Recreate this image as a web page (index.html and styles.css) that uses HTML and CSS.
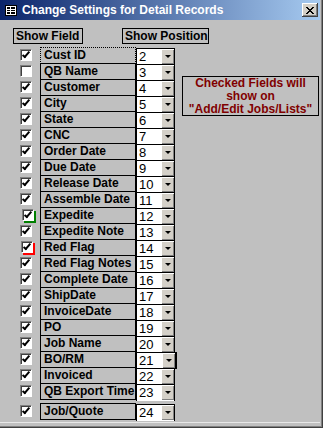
FILE: index.html
```html
<!DOCTYPE html>
<html lang="en">
<head>
    <meta charset="UTF-8">
    <title>Change Settings for Detail Records</title>
    <link rel="stylesheet" href="styles.css">
</head>
<body>
    <div class="window">
        <div class="titlebar">
            <svg class="app-icon" width="12" height="11" viewBox="0 0 12 11">
                <rect x="0.5" y="0.5" width="11" height="10" fill="#fff" stroke="#000"/>
                <rect x="2" y="2" width="3" height="2" fill="#000"/>
                <rect x="6" y="2" width="4" height="2" fill="#000"/>
                <rect x="2" y="5" width="3" height="1" fill="#000"/>
                <rect x="6" y="5" width="4" height="1" fill="#000"/>
                <rect x="2" y="7" width="3" height="2" fill="#000"/>
                <rect x="6" y="7" width="4" height="2" fill="#000"/>
            </svg>
            <span class="title">Change Settings for Detail Records</span>
            <span class="close-btn">
                <svg width="8" height="7" viewBox="0 0 8 7">
                    <path d="M0 0 L7 7 M1 0 L8 7 M7 0 L0 7 M8 0 L1 7" stroke="#000" stroke-width="1"/>
                </svg>
            </span>
        </div>

        <div class="form">
            <div class="headings">
                <div class="heading heading-field">Show Field</div>
                <div class="heading heading-pos">Show Position</div>
            </div>

            <div class="content">
                <div class="fields">
                    <div class="row"><span class="check on"></span><span class="label focus">Cust ID</span><span class="combo"><span class="val">2</span><span class="drop"></span></span></div>
                    <div class="row"><span class="check"></span><span class="label">QB Name</span><span class="combo"><span class="val">3</span><span class="drop"></span></span></div>
                    <div class="row"><span class="check on"></span><span class="label">Customer</span><span class="combo"><span class="val">4</span><span class="drop"></span></span></div>
                    <div class="row"><span class="check on"></span><span class="label">City</span><span class="combo"><span class="val">5</span><span class="drop"></span></span></div>
                    <div class="row"><span class="check on"></span><span class="label">State</span><span class="combo"><span class="val">6</span><span class="drop"></span></span></div>
                    <div class="row"><span class="check on"></span><span class="label">CNC</span><span class="combo"><span class="val">7</span><span class="drop"></span></span></div>
                    <div class="row"><span class="check on"></span><span class="label">Order Date</span><span class="combo"><span class="val">8</span><span class="drop"></span></span></div>
                    <div class="row"><span class="check on"></span><span class="label">Due Date</span><span class="combo"><span class="val">9</span><span class="drop"></span></span></div>
                    <div class="row"><span class="check on"></span><span class="label">Release Date</span><span class="combo"><span class="val">10</span><span class="drop"></span></span></div>
                    <div class="row"><span class="check on"></span><span class="label">Assemble Date</span><span class="combo"><span class="val">11</span><span class="drop"></span></span></div>
                    <div class="row"><span class="check on flag-green"></span><span class="label">Expedite</span><span class="combo"><span class="val">12</span><span class="drop"></span></span></div>
                    <div class="row"><span class="check on"></span><span class="label">Expedite Note</span><span class="combo"><span class="val">13</span><span class="drop"></span></span></div>
                    <div class="row"><span class="check on flag-red"></span><span class="label">Red Flag</span><span class="combo"><span class="val">14</span><span class="drop"></span></span></div>
                    <div class="row"><span class="check on"></span><span class="label">Red Flag Notes</span><span class="combo"><span class="val">15</span><span class="drop"></span></span></div>
                    <div class="row"><span class="check on"></span><span class="label">Complete Date</span><span class="combo"><span class="val">16</span><span class="drop"></span></span></div>
                    <div class="row"><span class="check on"></span><span class="label">ShipDate</span><span class="combo"><span class="val">17</span><span class="drop"></span></span></div>
                    <div class="row"><span class="check on"></span><span class="label">InvoiceDate</span><span class="combo"><span class="val">18</span><span class="drop"></span></span></div>
                    <div class="row"><span class="check on"></span><span class="label">PO</span><span class="combo"><span class="val">19</span><span class="drop"></span></span></div>
                    <div class="row"><span class="check on"></span><span class="label">Job Name</span><span class="combo"><span class="val">20</span><span class="drop"></span></span></div>
                    <div class="row"><span class="check on"></span><span class="label">BO/RM</span><span class="combo combo-wide"><span class="val">21</span><span class="drop"></span></span></div>
                    <div class="row"><span class="check on"></span><span class="label">Invoiced</span><span class="combo"><span class="val">22</span><span class="drop"></span></span></div>
                    <div class="row"><span class="check on"></span><span class="label">QB Export Time</span><span class="combo"><span class="val">23</span><span class="drop"></span></span></div>
                    <div class="row row-last"><span class="check on"></span><span class="label">Job/Quote</span><span class="combo"><span class="val">24</span><span class="drop"></span></span></div>
                </div>

                <div class="note">Checked Fields will<br>show on<br>"Add/Edit Jobs/Lists"</div>
            </div>
        </div>
    </div>
</body>
</html>
```

FILE: styles.css
```css
body {
    margin: 0;
    padding: 0;
    font-family: "Liberation Sans", Arial, sans-serif;
    background-color: #c0c0c0;
}

.window {
    position: relative;
    width: 323px;
    height: 428px;
    box-sizing: border-box;
    background-color: #c0c0c0;
    border-right: 1px solid #404040;
    border-bottom: 1px solid #404040;
    box-shadow: inset -1px -1px 0 #808080;
    overflow: hidden;
}

/* Заголовок окна */
.titlebar {
    display: flex;
    align-items: center;
    width: 320px;
    height: 20px;
    background: linear-gradient(to right, #0a246a, #a6caf0);
    color: #fff;
}

.app-icon {
    margin-left: 5px;
    flex-shrink: 0;
}

.title {
    margin-left: 5px;
    font-size: 12px;
    font-weight: bold;
    white-space: nowrap;
}

.close-btn {
    display: flex;
    align-items: center;
    justify-content: center;
    width: 16px;
    height: 14px;
    margin-left: auto;
    margin-right: 2px;
    background-color: #d4d0c8;
    box-shadow: inset -1px -1px 0 #404040, inset 1px 1px 0 #fff, inset -2px -2px 0 #808080;
}

/* Форма */
.form {
    box-sizing: border-box;
    width: 320px;
    height: 403px;
    padding-top: 8px;
    border-bottom: 1px solid #e8e8e8;
}

.headings {
    display: flex;
    height: 16px;
}

.heading {
    box-sizing: border-box;
    height: 16px;
    border: 1px solid #000;
    font-size: 12px;
    font-weight: bold;
    line-height: 14px;
    padding-left: 2px;
    white-space: nowrap;
}

.heading-field {
    margin-left: 13px;
    width: 70px;
}

.heading-pos {
    margin-left: 39px;
    width: 87px;
}

.content {
    display: flex;
    align-items: flex-start;
    margin-top: 3px;
}

.fields {
    display: flex;
    flex-direction: column;
}

.row {
    display: flex;
    height: 16px;
}

.row-last {
    margin-top: 4px;
}

.check {
    position: relative;
    box-sizing: border-box;
    width: 12px;
    height: 12px;
    margin-left: 20px;
    margin-top: 2px;
    background-color: #fff;
    border-top: 1px solid #808080;
    border-left: 1px solid #808080;
    border-right: 1px solid #fff;
    border-bottom: 1px solid #fff;
    box-shadow: inset 1px 1px 0 #404040;
}

.check.on::after {
    content: "";
    position: absolute;
    left: 3px;
    top: 0px;
    width: 2px;
    height: 6px;
    border-right: 2px solid #000;
    border-bottom: 2px solid #000;
    transform: rotate(40deg);
}

.flag-green {
    margin-left: 22px;
    margin-right: -2px;
    box-shadow: inset 1px 1px 0 #404040, 2px 2px 0 #008000;
}

.flag-red {
    margin-left: 21px;
    margin-right: -1px;
    box-shadow: inset 1px 1px 0 #404040, 2px 2px 0 #ff0000;
}

.label {
    box-sizing: border-box;
    width: 96px;
    height: 17px;
    margin-left: 8px;
    padding-left: 3px;
    border: 1px solid #000;
    font-size: 12px;
    font-weight: bold;
    line-height: 15px;
    white-space: nowrap;
}

.label.focus {
    border-style: dotted;
}

.combo {
    display: flex;
    box-sizing: border-box;
    width: 39px;
    height: 17px;
    margin-top: 1px;
    background-color: #fff;
    border-top: 1px solid #000;
    border-left: 1px solid #000;
    border-right: 1px solid #000;
}

.combo-wide {
    width: 41px;
    border-right-width: 2px;
}

.val {
    flex: 1;
    padding-left: 2px;
    font-size: 13px;
    line-height: 15px;
}

.drop {
    position: relative;
    box-sizing: border-box;
    width: 13px;
    height: 15px;
    background-color: #d4d0c8;
    box-shadow: inset 1px 1px 0 #fff, inset -1px -1px 0 #808080;
}

.drop::after {
    content: "";
    position: absolute;
    left: 4px;
    top: 6px;
    border-left: 3px solid transparent;
    border-right: 3px solid transparent;
    border-top: 3px solid #000;
}

/* Подсказка */
.note {
    box-sizing: border-box;
    width: 137px;
    height: 40px;
    margin-top: 29px;
    margin-left: 5px;
    border: 1px solid #000;
    color: #800000;
    font-size: 12px;
    font-weight: bold;
    line-height: 13px;
    text-align: center;
}
```
